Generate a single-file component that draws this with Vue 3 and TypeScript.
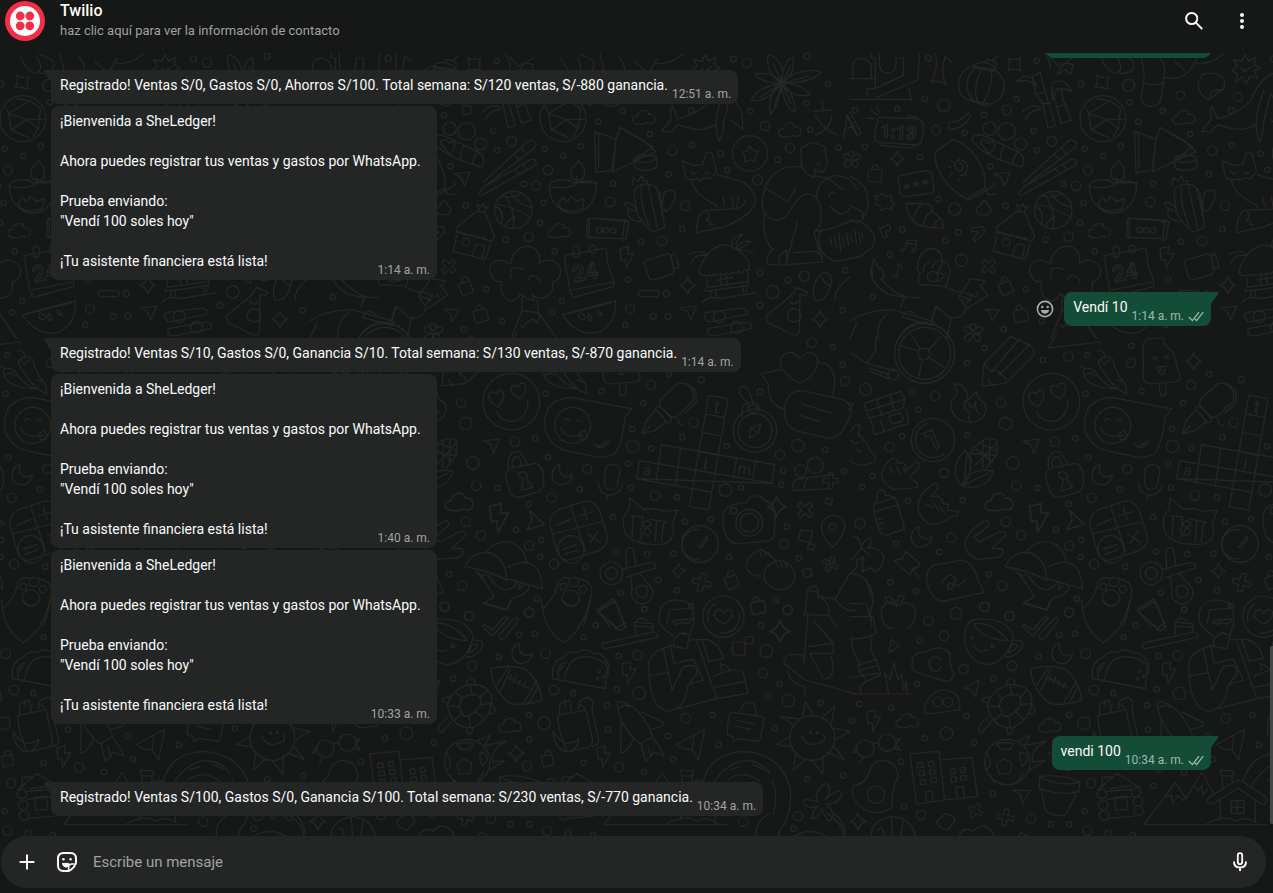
<script setup lang="ts">
import { ref } from 'vue'

interface Message {
  id: number
  from: 'contact' | 'me'
  intro?: string
  text: string
  time: string
  tail?: boolean
  reaction?: boolean
}

interface Label {
  text: string
  x: number
  y: number
  size: number
  turn: number
  thin?: boolean
}

interface DoodleRow {
  y: number
  shapes: string[]
  circles: number[][]
  stamps: [string, number, number, number, number][]
  labels: Label[]
}

const intro = `¡Bienvenida a SheLedger!

Ahora puedes registrar tus ventas y gastos por WhatsApp.

Prueba enviando:
"Vendí 100 soles hoy"

`
const ready = '¡Tu asistente financiera está lista!'

const messages: Message[] = [
  { id: 1, from: 'me', text: '', time: '' },
  { id: 2, from: 'contact', text: 'Registrado! Ventas S/0, Gastos S/0, Ahorros S/100. Total semana: S/120 ventas, S/-880 ganancia.', time: '12:51 a. m.', tail: true },
  { id: 3, from: 'contact', intro, text: ready, time: '1:14 a. m.' },
  { id: 4, from: 'me', text: 'Vendí 10', time: '1:14 a. m.', tail: true, reaction: true },
  { id: 5, from: 'contact', text: 'Registrado! Ventas S/10, Gastos S/0, Ganancia S/10. Total semana: S/130 ventas, S/-870 ganancia.', time: '1:14 a. m.', tail: true },
  { id: 6, from: 'contact', intro, text: ready, time: '1:40 a. m.' },
  { id: 7, from: 'contact', intro, text: ready, time: '10:33 a. m.' },
  { id: 8, from: 'me', text: 'vendi 100', time: '10:34 a. m.', tail: true },
  { id: 9, from: 'contact', text: 'Registrado! Ventas S/100, Gastos S/0, Ganancia S/100. Total semana: S/230 ventas, S/-770 ganancia.', time: '10:34 a. m.', tail: true },
]

const draft = ref('')

// Small motifs repeated across the wallpaper, each centred on its own origin.
const motifs: Record<string, string> = {
  spark: 'M0-23Q5-6 21 0Q6 5 0 23Q-5 6-21 0Q-6-5 0-23Z',
  square: 'M-19-19Q0-10 19-19Q11 0 19 19Q0 11-19 19Q-11 0-19-19Z',
  cloud: 'M-20 20C-40 20-38-6-20-3C-17-24 12-28 14-9C32-14 42 14 22 19C12 20 12 12 4 18C-4 24-12 20-20 20Z',
  cross: 'M-7-25Q0-29 7-25L7-7L25-7Q29 0 25 7L7 7L7 25Q0 29-7 25L-7 7L-25 7Q-29 0-25-7L-7-7Z',
  bolt: 'M-20-26L6-32L4-10L22-12L-2 32L-4 6L-16 8Z',
  plane: 'M-26-12L24-18L6 24L-4-2Z',
  moon: 'M-6-30C-32-24-40 14-14 28C8 38 30 20 31 0C16 14-16 4-6-30Z',
  tag: 'M-22-8L12-20L24 12L-8 26Z M-10-12C-16-34 4-40 10-20',
  lock: 'M-24-8Q-24-14-18-14L16-14Q22-14 22-8L22 20Q22 26 16 26L-18 26Q-24 26-24 20Z M-10-14C-14-36 12-36 10-14',
  smile: 'M-85 0A85 85 0 1 0 85 0A85 85 0 1 0-85 0Z M-44 30C-24 76 50 70 50-4 M-40 16C-84-8-70-40-44-24C-36-50-4-26-40 16Z M28-10C-20-24 0-62 18-44C30-72 62-46 28-10Z',
  flower: 'M0-6C-14-14-16-30-2-28C12-28 10-14 0-6C8-20 26-24 28-12C28 0 14 0 0 0C16 0 28 16 18 22C8 30 0 14 0 4C-4 22-20 30-26 18C-28 8-14 2-2 0C-22 0-34-12-24-20C-14-26-6-14 0-6Z',
}

const rows: DoodleRow[] = [
  {
    y: 150,
    shapes: [
      // Worker at a box, jug and table
      'M8 84L8 50C8 14 62 18 64 54L64 84 M0 86L76 86L76 114L52 116L52 136 M64-10L64 24 M64 24L76 24L76 86 M88-20L88 42C88 80 138 78 138 42L138 24L160 24L160 76L70 118 M210-20L204 90L80 142 M176 112L184 148L0 148 M252-10Q270 60 242 94Q266 90 290 104Q268 70 286 20L304 36',
      // Lantern
      'M350 148C312 128 320 60 368 48L430 58C478 84 472 148 420 162Z M376 42Q404 28 438 54L430 64L370 52Z M358 150L408 168L416 164 M404 38C410 22 434 30 440 44 M428 30L444 18 M374 54C338 92 350 128 370 152 M396 58C372 96 374 136 384 156 M424 60C430 100 412 142 396 162 M356 188C338 208 316 218 298 216L296 240C330 236 354 222 362 192',
      // Bamboo
      'M546 76Q560 78 570 66L586 126L558 134Z M558 134L578 160L594 234L616 226L586 126 M498 96Q526 68 548 86L560 108Q530 84 498 96Z M574 160L604 160 M606 120L634 220L664 210L638 146L634 116Z M620 170L650 162 M608 100Q640 78 666 124Q640 112 620 120L608 150Q600 118 608 100Z M518 184Q552 156 574 176 M528 208Q538 178 574 180',
      // Volleyball globe
      'M690 206A68 68 0 1 0 828 206A68 68 0 1 0 690 206Z M706 170L716 190L724 240L776 262 M716 190L780 152L812 176L804 236L770 208L716 190 M780 152L740 146 M724 240L770 208L826 208 M804 236L790 260',
      // Leaves, balloon and sock
      'M586 10Q606 44 600 56 M600 22L626 50Q640 34 670 44L662 74L646 58L622 74Q634 42 668 24 M752 22Q774 70 800 70Q824 56 800 22 M806 12Q864 30 850 54Q842 72 806 70 M868 4L880 50Q886 88 876 128C860 176 924 180 932 150L944 66Q946 42 926 20 M878 98Q912 110 942 98 M942 82Q1010 98 1040 26 M974 34L1006 62 M1040 40Q1080 44 1120 12 M1044 100L1058 74Q1090 62 1120 82Q1132 110 1110 124L1078 148Q1046 140 1044 100Z M1078 144Q1084 110 1118 122',
      // Badge
      'M1186 14L1196 34L1216 22L1212 44L1232 54L1212 62L1222 84L1200 78L1190 100L1176 80L1158 96L1162 72L1146 62L1162 48L1150 28L1174 34Z M1174 54L1184 64L1204 50',
      // Star anise
      'M1414 100C1372 70 1366 30 1378 14C1404 22 1428 62 1414 100Z M1414 100C1414 54 1434 24 1448 22C1456 58 1440 84 1414 100Z M1414 100C1450 62 1500 56 1534 66C1516 88 1470 100 1414 100Z M1414 100C1452 98 1488 112 1500 134C1470 142 1434 132 1414 100Z M1414 100C1444 120 1458 156 1454 186C1436 176 1416 146 1414 100Z M1414 100C1412 142 1398 176 1382 192C1374 156 1384 122 1414 100Z M1414 100C1386 140 1352 154 1324 152C1336 124 1370 106 1414 100Z M1414 100C1370 100 1346 88 1336 72C1366 66 1402 76 1414 100Z M1414 94L1390 42 M1420 94L1440 50 M1424 98L1496 78 M1406 106L1350 142 M1412 110L1394 168 M1420 108L1442 160',
      // Dolphin
      'M1270 70Q1230 84 1202 152Q1158 196 1102 206Q1094 180 1086 168Q1078 184 1084 208L1054 244L1082 246L1104 224Q1148 240 1180 238L1220 224 M1242 120Q1204 220 1228 274Q1242 250 1240 222L1262 130',
      'M1264 134L1296 186L1298 238L1260 208',
      // Alarm clock
      'M86 202L204 206Q224 212 220 246L214 276Q208 286 190 284L92 278Q70 276 74 246Z M90 278L92 286L180 294L196 286 M172 204L174 198L200 200L204 206 M80 174L90 188 M62 180L82 194 M50 204L72 206',
      // Surfboard
      'M308 268C376 288 412 366 404 414L350 446C284 412 250 350 256 306Z M350 446L358 450L436 404L430 396 M404 414L414 434L438 432 M328 340C344 338 344 366 326 362C306 354 312 322 340 332C360 344 352 376 330 376 M326 324L326 330 M304 332L310 338 M296 352L304 352 M300 376L308 370 M326 392L326 384 M352 378L346 370',
      // Cast with a heart
      'M366 266Q372 250 398 256L502 304Q530 320 518 344L510 350L440 326Q372 292 366 266Z M400 290C376 268 410 262 416 280C430 266 448 284 418 312Z M452 324Q450 290 468 288 M488 342Q490 312 508 306',
      // Chopsticks
      'M518 398L652 276Q664 264 678 278Q680 286 674 294L530 404 M504 434L520 412L664 328Q680 324 678 344L512 438 M614 314L630 330 M636 296L650 314 M616 358L630 374 M640 344L650 360',
      // Tents and puck
      'M854 244L918 268L906 360L858 368L854 244L866 252L866 352 M918 268L930 232L1028 290L970 336L908 366Z M930 232L1000 270L1038 306L974 332 M972 326C980 312 1030 312 1040 324L1040 350C1028 364 984 366 974 350Z M972 328C986 342 1030 340 1040 324',
      // Oil lamp
      'M718 408C716 388 774 384 790 398L860 398C860 452 830 490 786 490C742 486 718 448 718 408Z M718 408C740 416 790 416 800 398Q834 386 860 402 M784 374C776 350 800 348 806 332Q830 362 822 378C816 396 784 392 784 374Z M800 380L800 402 M744 460L758 442L770 456L782 440L800 454L822 446L818 474Q782 492 752 474Z',
      // Basketball
      'M554 480A56 56 0 1 0 666 480A56 56 0 1 0 554 480Z M582 432Q618 480 610 536 M600 424Q616 460 664 472 M576 438Q614 446 636 428 M558 462Q608 470 660 500 M574 520Q584 482 558 470 M614 500Q596 508 586 530',
      // Cactus
      'M972 426C982 392 1040 396 1050 430L1064 532L1030 546Q998 524 980 486Z M994 408Q988 460 1018 530 M1014 402Q1024 450 1044 540 M1038 412Q1050 450 1058 500 M972 482Q942 474 944 458Q980 460 978 486 M954 480Q948 516 998 514 M1062 430Q1084 410 1096 430Q1094 468 1068 484L1056 470Z M966 404L970 382L984 394L996 376L1000 392L1014 392L1008 404',
      // Fox
      'M1116 332L1128 386L1144 390L1164 386L1170 392L1180 384L1202 386L1220 364L1206 310L1192 306L1176 344L1150 346Z M1144 392Q1154 436 1216 464L1224 472 M1222 374L1300 396Q1340 424 1336 460Q1320 500 1244 530L1160 548Q1160 492 1186 480L1246 478Q1306 480 1306 450 M1188 482Q1208 500 1188 510L1202 516L1198 524L1210 524 M1140 364L1152 372L1160 366 M1184 366L1192 372L1200 364 M1238 442L1244 468 M1264 438L1270 476 M1286 440L1280 474',
      // Record with a star
      'M1267 310A53 53 0 1 0 1373 310A53 53 0 1 0 1267 310Z M1318 286L1328 300L1344 304L1336 318L1336 334L1320 330L1304 336L1304 318L1296 306L1312 302Z',
      // Seated reader
      'M1474 316Q1466 290 1490 286Q1512 270 1530 286Q1548 286 1546 306L1552 334Q1548 352 1540 366Q1520 366 1516 356L1512 382Q1482 372 1474 340Z M1520 344Q1530 334 1534 350 M1474 352C1420 342 1380 370 1364 414L1432 454L1458 416 M1516 378L1554 384L1600 420 M1366 418C1342 470 1368 516 1408 510C1440 506 1450 440 1490 432C1530 430 1540 480 1530 526L1512 548L1538 636L1410 646L1404 622L1430 600L1430 646 M1364 492C1354 550 1380 600 1390 596C1368 612 1368 640 1378 644L1410 642 M1462 516L1428 640 M1452 608L1516 604L1538 620 M1432 644L1540 636',
      // Speech mark with a smiley
      'M1520 450A62 62 0 0 1 1640 420 M1556 440Q1564 420 1574 430 M1562 470Q1594 510 1620 476 M0 380Q52 400 54 450Q56 500 24 516L0 510 M-2 466L38 486L40 506 M0 514L30 514Q90 550 68 590L30 620L0 626L-42 634Q-80 622 -90 594L-94 556L-84 540L-102 544L-60 536Z',
      // Sound wave in the speech mark
      'M-58 564L-54 586 M-46 556L-42 594 M-34 548L-28 602 M-22 560L-18 590 M-10 548L-4 588 M2 554L6 576 M14 540L20 584 M26 544L32 580 M36 550L38 566',
      // Password note, shell, cream swirl
      'M144 386Q142 378 154 376L226 362Q242 360 246 376L252 416Q252 428 240 430L168 440Q154 440 150 428Z M170 400L170 416 M162 406L178 412 M178 404L162 414 M198 394L198 410 M190 400L206 406 M206 398L190 408 M226 388L226 404 M218 394L234 400 M234 392L218 402',
      'M170 460L232 462Q250 468 248 486L276 508Q278 526 280 534Q240 534 232 530Q188 530 170 480Z M216 462Q198 480 190 506 M248 482Q226 492 218 530 M270 506Q250 516 252 534',
      'M380 474Q392 470 398 454Q410 446 412 466L422 474Q424 492 410 494Q374 498 380 474Z M74 436L88 438L98 430L108 440L122 436L124 452L134 462L122 470L126 480L106 474L94 482L90 468L76 462L82 450Z',
      // House with a thatched roof
      'M500 484L440 532L438 544L546 574L554 560L524 486Z M438 544Q446 554 452 546Q460 558 468 550Q476 562 486 554Q496 566 504 558Q514 570 522 562Q530 572 540 572 M440 556L430 604L526 628L542 578 M456 576A12 12 0 1 0 480 576A12 12 0 1 0 456 576Z M488 616L494 588Q516 574 524 592L516 624 M510 482L500 464L514 470L520 460L524 474L536 468L524 484',
      // Message banner
      'M838 504L838 560Q838 566 830 562L832 510ZL944 514L938 566L836 562 M838 504L950 510L956 518L948 566L938 572 M944 514L956 514',
      // Tree
      'M602 642C608 570 700 574 688 640C714 616 766 640 748 680Q738 698 726 696C738 740 690 758 668 734 M602 642C558 616 530 644 542 674Q552 700 576 694C560 748 612 772 630 732C660 752 680 760 668 736 M604 684Q592 642 640 658 M654 690C656 670 686 674 690 696 M638 734L634 786L604 866 M682 752L686 788L740 866 M636 782L682 788L690 800L680 820L668 806L652 816L640 832L630 824',
      // Calendar
      'M766 616L888 594L894 646L912 696L910 710L790 742L780 724L766 640Z M790 606A10 12 0 1 0 808 604A10 12 0 1 0 790 606Z M838 598A10 12 0 1 0 858 598A10 12 0 1 0 838 598Z M784 720L910 696',
      // Watermelon
      'M758 794L916 752Q922 824 862 848Q798 858 758 794Z M772 792L906 758 M806 794Q810 784 820 794Q830 802 824 808Q808 812 806 794Z M836 790Q848 800 844 812Q828 810 836 790Z M862 780Q874 784 876 796Q860 796 862 780Z',
      // Video camera and bar
      'M1004 644Q1000 634 1010 630L1070 612Q1080 610 1084 620L1092 664Q1092 672 1080 674L1030 690Q1020 690 1016 680Z M1082 620L1094 608L1108 652L1092 656 M990 722L1042 722Q1054 730 1042 740L990 740Q978 730 990 722Z',
      // Beach hut
      'M1166 668C1176 620 1210 590 1240 584C1290 592 1320 626 1318 656Q1312 668 1304 658Q1296 674 1286 664Q1278 676 1268 666Q1258 678 1250 668Q1240 682 1232 670Q1222 682 1214 672Q1204 682 1196 674Q1180 684 1166 668Z M1190 684L1192 712L1316 694L1312 666 M1184 714L1186 724L1316 706L1314 694 M1202 724L1204 744 M1216 720L1218 742 M1298 706L1302 728 M1308 706L1310 724 M1176 756Q1200 736 1230 746L1340 728 M1232 678L1234 704 M1248 676L1252 700 M1222 690L1268 682 M1138 612Q1176 596 1190 614 M1144 640Q1150 612 1188 616 M1268 594Q1256 566 1298 552Q1274 576 1280 594Q1300 566 1324 576L1280 600Q1300 594 1330 612',
      // Sliders and flask
      'M1186 788L1296 774Q1320 782 1312 792L1200 816Q1180 814 1186 788Z M1194 836L1310 816Q1330 820 1322 836L1210 858Q1190 856 1194 836Z M1210 800A18 18 0 1 0 1246 800A18 18 0 1 0 1210 800Z M1262 832A18 18 0 1 0 1298 832A18 18 0 1 0 1262 832Z',
      'M1460 712L1494 728L1486 738L1470 732L1468 840Q1466 862 1444 852L1374 818Q1360 800 1380 788L1446 734Z M1432 796A20 20 0 1 0 1472 796A20 20 0 1 0 1432 796Z M1442 752A10 10 0 1 0 1462 752',
      'M1514 750Q1500 700 1540 666Q1570 670 1564 700Q1550 760 1514 750Z M1534 680Q1542 700 1560 706 M1576 750Q1570 720 1620 680',
      // Dancer
      'M204 640Q212 596 246 596Q276 598 276 630Q306 650 300 670L288 710 M204 644Q196 662 210 668Q200 690 210 704L280 708Q320 730 340 726L376 740 M232 680A16 16 0 1 0 264 680A16 16 0 1 0 232 680Z M236 636Q214 650 222 666 M246 652L254 640Q270 620 278 640L262 668L284 674Q270 700 262 690 M68 682Q62 640 72 628L84 652Q100 650 102 682L92 686Q150 752 206 742 M62 654Q58 700 116 734L164 742L152 770 M356 686L404 692Q398 708 390 706L414 734L352 776L326 740L360 690 M334 738L364 752 M366 736L350 762 M380 728L386 742 M256 770L242 820L260 768L298 804Q340 808 348 776 M306 800L290 866',
      // Umbrella and hill
      'M0 812Q60 776 130 780L220 806L254 816L246 826L158 802 M158 802Q170 770 200 796 M0 866L20 820 M84 866Q80 810 116 790 M146 866Q170 816 222 816Q280 826 300 866',
      // Musical notes, candy cane
      'M162 604Q152 606 154 600Q158 594 164 598L172 570L202 572L194 604Q186 608 186 602Q188 596 194 598 M170 580L200 582 M132 676A6 5 0 1 0 142 674L144 640L156 648L154 658 M88 536L118 522L122 540L106 544L112 560L102 564ZM366 534L400 530L404 548L374 576L370 566L386 546L368 544Z',
      // Language glyph
      'M1510 184L1568 180 M1536 150L1540 180 M1516 196Q1540 240 1580 254 M1566 196Q1560 240 1516 254 M1600 262L1612 196L1640 250 M1604 236L1634 228 M-10 196L20 256L34 250L0 186',
    ],
    circles: [[235,25,9],[560,33,8],[224,146,8],[282,166,19],[693,103,9],[836,106,18],[840,157,8],[499,148,8],[991,136,13],[1164,141,13],[470,180,14],[142,177,8],[15,181,8],[402,195,8],[938,183,8],[1144,182,9],[865,215,8],[258,240,14],[344,249,8],[550,242,8],[1020,252,8],[605,274,15],[44,290,8],[210,321,8],[704,297,8],[812,289,8],[561,300,8],[760,317,8],[1087,302,14],[1145,285,8],[1232,311,8],[421,349,8],[714,361,14],[1076,372,8],[1252,360,8],[641,402,8],[678,407,14],[909,401,8],[265,448,8],[314,477,18],[467,467,8],[701,458,8],[901,456,14],[1126,467,14],[157,539,8],[325,547,8],[690,519,8],[656,560,14],[587,569,8],[1117,538,8],[993,575,8],[1056,573,14],[286,572,8],[120,614,8],[734,604,8],[955,689,8],[528,718,8],[68,741,8],[334,631,18],[1365,228,14],[1501,240,8],[1554,103,8],[1488,160,8],[1491,19,9],[1311,38,14],[1270,27,9],[1440,295,14],[1404,329,8],[1585,293,8],[1343,390,15],[1350,668,9],[1435,690,9],[1483,678,15],[1388,726,19],[1350,766,9],[1598,781,8],[1606,661,8],[1320,184,8],[1069,731,9],[1030,799,9],[1074,799,9],[960,778,13],[946,825,8],[727,787,8],[756,753,8],[576,814,8],[461,838,8],[868,540,8],[888,541,8],[909,542,8],[419,236,20],[470,244,26],[512,282,18],[1414,103,9]],
    stamps: [['square', 493, 43, 0, 1], ['square', 757, 97, 8, 1], ['cloud', 1002, 202, 0, 1], ['cloud', 1440, 240, 0, 1], ['cloud', 748, 542, 0, 1], ['spark', 142, 326, 0, 1], ['spark', 1133, 706, 0, 1.1], ['spark', 1530, 808, 0, 1.1], ['cross', 416, 649, 45, 0.9], ['bolt', 950, 622, 0, 1], ['plane', 457, 384, 0, 1], ['plane', 1136, 786, 0, 1], ['plane', 424, 792, 10, 0.9], ['tag', 466, 712, 0, 1], ['lock', 76, 372, 0, 0.9], ['lock', 512, 792, -14, 0.9], ['flower', 6, 330, 0, 0.9], ['flower', 370, 850, 0, 1]],
    labels: [{ text: '1:13', x: 90, y: 262, size: 54, turn: 4 }, { text: '24', x: 792, y: 696, size: 66, turn: -10 }],
  },
  {
    y: 1020,
    shapes: [
      // Wheel
      'M134 40A90 90 0 1 0 314 40A90 90 0 1 0 134 40Z M146 40A78 78 0 1 0 302 40A78 78 0 1 0 146 40Z M204 42A18 18 0 1 0 240 42A18 18 0 1 0 204 42Z M206 34L152 16 M216 60L206 114 M236 52L282 82 M236 30L272-10 M210 28L190-8 M0 38L50 70L76 34L78-10 M50 70L134 92 M56 84L118 104 M62 94L116 116 M114 104A16 16 0 1 0 146 104A16 16 0 1 0 114 104Z',
      // Pencil
      'M396 138L402 72L482-10L540 16Q556 30 552 46L468 130Z M402 72L426 96Q440 80 452 104Q470 110 468 130 M426 94L510-6 M448 104L540 12 M414 118L428 138 M596 24L752 6 M596 24L620-20',
      // Popsicle and chillies
      'M880 12Q886-2 900-4L940-6Q940 20 970 36L990 110Q990 124 974 126L900 132Q880 130 880 112Z M928 134L930 162Q940 172 948 162L948 132 M908 50L922 54L910 60 M956 46L944 52L956 58 M918 82L950 78 M924 82Q926 104 936 104Q946 102 944 80 M934 82L934 94',
      'M744 66Q764 40 788 58Q796 100 826 132L830 162Q780 140 744 66Z M700 90Q716 76 736 96Q760 134 798 146L766 144Q700 134 700 90Z M764 48Q764 32 744 30 M706 86L690 76 M800 120L826 128 M754 64L764 74L774 62 M708 104L722 98L734 106',
      // Gift, fire, clock, corn
      'M42 190L152 154L164 176L160 204L56 236Z M62 240L74 284L176 250L168 210 M80 178L96 228 M120 166L134 214 M52 212L164 178 M116 230L150 218Q164 230 156 244L126 252Z M90 240L104 276',
      'M312 132Q350 130 354 180L380 154Q382 180 406 190Q416 232 374 246Q318 252 304 206Q300 180 320 166Q322 150 312 132Z M346 178Q336 206 360 220Q350 236 362 244 M346 178L366 204L378 184Q372 212 390 222',
      'M184 300A65 65 0 1 0 314 300A65 65 0 1 0 184 300Z M232 250A53 53 0 1 0 282 342 M220 280L246 270L268 322L258 326L240 288L228 290Z',
      'M366 366L358 340L396 302Q412 290 438 300Q446 324 438 346L406 388 M358 340L436 346 M368 320L430 366 M384 308L440 332 M400 298L398 386 M420 296L418 376 M438 310L376 376 M332 436Q294 380 346 330Q380 380 342 436Z M334 438Q360 380 430 394Q408 456 334 438Z M342 432L350 346 M344 434L414 400',
      // Winking speech mark
      'M704 250Q706 176 784 172L942 202L966 206L944 234Q940 300 916 340Q880 360 836 346L760 330Q704 306 704 250Z M734 256A54 54 0 1 0 842 256A54 54 0 1 0 734 256Z M764 242Q770 228 780 242 M800 244Q810 232 816 246 M752 262Q760 296 820 286 M806 282L814 300Q830 302 830 288L824 270Z M854 312L866 324L890 302 M866 316L876 324L900 304',
      // Padlock, fountain pen, microphone
      'M586 410Q590 390 604 384L676 370Q692 372 698 396L702 430Q696 450 684 456L630 472Q610 474 600 456Z M596 384L594 362Q602 330 630 336L650 366L650 374 M608 382Q602 352 622 350Q632 352 634 376 M634 452L640 418Q620 410 628 398Q646 390 654 408L648 416L668 442Z',
      'M1050 198Q1046 182 1056 174L1102 132Q1122 124 1140 140Q1156 160 1150 184L1104 226Q1092 238 1080 228Z M1132 132L1156 150L1160 186L1124 220 M1036 206Q1044 190 1062 210L1084 236Q1084 250 1072 248Z M1038 210L1010 240L996 282L1034 272L1068 246 M1000 280L1020 258 M1104 236Q1104 254 1118 256',
      'M886 388Q890 374 908 374Q930 376 930 392L922 434Q916 450 900 450Q884 444 884 430Z M866 426Q866 464 900 466Q930 462 936 436 M894 466L890 480',
      // Crossword
      'M1054 314L1394 374L1384 430L980 416L988 362L1390 430 M980 416L988 362L1046 372L1054 314 M980 416L1200 456 M1196 166L1254 176L1196 510L1138 500L1196 166 M1188 222L1244 232 M1178 278L1234 288 M1168 334L1224 346 M1158 390L1214 400 M1148 446L1204 456 M1112 324L1096 436 M1046 372L1038 426 M1280 356L1270 412 M1336 366L1328 420',
      // Compass
      'M1270 272A65 65 0 1 0 1400 272A65 65 0 1 0 1270 272Z M1284 272A51 51 0 1 0 1386 272A51 51 0 1 0 1284 272Z M1296 228Q1292 190 1324 186Q1350 188 1346 216 M1314 206A12 12 0 1 0 1338 206A12 12 0 1 0 1314 206Z M1318 200L1288 158Q1288 134 1306 140Q1322 156 1330 194 M1318 294L1322 264L1352 252L1346 278Z M1322 264L1346 278',
      // Heart and chat bubbles
      'M1470 130Q1402 96 1414 52Q1440 20 1470 56Q1500 20 1522 54Q1530 100 1470 130Z M1524 68Q1560 66 1570 100Q1580 140 1566 168 M1412 88L1354 102L1376 134Q1370 190 1422 208 M1424 206Q1430 150 1480 152L1600 180Q1640 200 1610 250Q1590 300 1550 294L1458 272Q1420 256 1424 206Z M1476 192L1566 220 M1470 226L1526 244 M-10 186L10 192L-4 208',
      // Hands
      'M0 276Q20 246 30 256L24 286Q40 290 42 304L54 314Q60 324 60 334Q80 344 74 364Q30 388 0 362 M4 300L14 312L26 306 M20 328L34 336 M94 402Q100 370 130 354Q142 356 144 370L160 368Q172 382 168 392L196 366Q214 364 206 384L178 412L202 430Q208 444 190 444L130 448Q98 434 94 402Z M120 382L130 400 M140 380L150 404 M160 384L168 400',
      'M204 496Q204 464 250 432Q266 426 264 444L244 470L262 468Q280 478 278 490L296 494L294 510L324 514Q328 530 304 530Q274 556 240 552Q204 536 204 496Z M228 492L250 504 M250 488L266 512 M270 500L284 520 M344 610Q350 576 402 544Q418 538 416 556L386 582L370 590L390 606L408 596L448 576Q470 572 468 586L424 626L456 626Q466 640 446 652L384 658Q348 648 344 610Z',
      // Baby bottle and pin
      'M70 510Q68 492 82 482Q78 450 94 450Q108 452 106 468Q134 462 144 494L164 566L112 586Q90 586 84 560Z M74 492L136 472 M74 514L146 494 M84 538L96 536 M86 552L104 548 M90 566L100 564 M132 662L158 656L166 634L208 668L206 680L190 684L180 704Z M188 688L208 714 M204 682L188 690',
      // Calculator, crying cat, dial
      'M720 556Q716 524 748 508L820 484Q850 478 868 510L892 590Q892 622 866 632L780 660Q756 666 744 640Z M782 500L828 636 M726 582L874 546 M740 556L782 538 M806 528L846 516 M820 500L832 540 M834 582L872 608 M864 574L840 610 M746 636A38 38 0 1 1 820 620A38 38 0 1 1 746 636Z M758 628L800 614 M766 642L804 630',
      'M944 524L958 508L960 474L1000 508Q1040 502 1058 514L1102 510L1088 550Q1100 600 1060 612Q980 620 948 584Q934 550 944 524Z M960 528L998 530L996 536Q1000 560 990 570Q1000 590 988 600 M970 532L966 590 M1020 538L1070 546L1060 552L1054 604 M1040 542L1036 604 M1000 552A10 8 0 1 0 1022 552A10 8 0 1 0 1000 552Z M1000 582Q1008 552 1022 572Q1020 590 1000 582Z',
      'M1115 612A55 55 0 1 0 1225 612A55 55 0 1 0 1115 612Z M1168 570A44 44 0 1 0 1170 656 M1166 622L1190 590L1194 596L1174 624Z',
      // Photo camera
      'M1238 536Q1238 504 1268 494L1310 486L1322 468L1352 468L1366 482Q1396 490 1396 530L1392 590Q1380 604 1360 604L1280 612Q1250 604 1242 570Z M1278 548A40 40 0 1 0 1358 548A40 40 0 1 0 1278 548Z M1290 548A28 28 0 1 0 1346 548A28 28 0 1 0 1290 548Z M1260 512A10 10 0 1 0 1280 512A10 10 0 1 0 1260 512Z',
      // Cast and location marker
      'M1450 446Q1444 420 1470 416L1570 404 M1448 452L1560 446 M1484 450Q1480 420 1500 410 M1568 622Q1530 590 1534 552Q1550 520 1580 528Q1610 540 1604 566Q1590 600 1568 622Z M1558 560A10 10 0 1 0 1578 560A10 10 0 1 0 1558 560Z M1472 570L1508 574L1500 608L1466 600Z M1496 610L1514 614L1510 630L1492 626Z M1476 690L1500 684L1506 706L1484 714Z M1548 474L1568 478L1564 494L1546 490Z',
      // Mushrooms, paw, scissors
      'M464 680Q490 630 540 638Q590 660 590 720Q530 690 464 680Z M526 640Q550 600 600 606Q640 620 650 664 M594 682Q650 650 682 686Q700 720 696 746Q640 730 590 716 M496 692Q540 740 552 770L520 790L588 810L606 776Q660 760 656 738 M506 698L516 710L528 702 M534 706Q570 760 600 746Q620 738 620 724 M628 732L626 748L640 736',
      'M696 808Q740 770 744 726Q760 706 780 716 M802 716Q840 720 846 750Q840 800 820 860 M750 740A10 10 0 1 0 770 740A10 10 0 1 0 750 740Z M778 726A14 14 0 1 0 806 726A14 14 0 1 0 778 726Z M808 748A10 10 0 1 0 830 748A10 10 0 1 0 808 748Z M756 774A26 24 0 1 0 808 774A26 24 0 1 0 756 774Z',
      'M870 700A34 34 0 1 0 938 700A34 34 0 1 0 870 700Z M886 700A18 18 0 1 0 922 700A18 18 0 1 0 886 700Z M936 688L1020 668Q1040 670 1036 684L948 712 M950 690L948 632Q958 616 970 628L978 676 M962 710L966 750A32 32 0 1 0 1022 740L988 700 M978 754A18 18 0 1 0 1014 754A18 18 0 1 0 978 754Z',
      // Bow, note and apple
      'M10 590Q30 590 34 624Q40 600 62 592Q66 620 50 624Q90 620 102 650Q100 680 76 696L60 682L36 696L40 652L20 660Q30 680 0 700 M34 624L6 660 M34 624L60 646 M230 720Q226 690 252 676L336 660Q370 666 384 720L402 758L350 768L280 784Q240 780 230 720Z M276 728Q300 690 316 716Q310 750 294 748Q286 720 322 738L348 720 M144 796Q110 770 94 810Q90 860 130 866 M144 796Q180 776 196 810Q200 850 170 866 M140 800Q132 770 106 770Q110 794 136 796 M142 786L146 766L164 772L152 788',
      // Dumplings
      'M1308 680Q1310 644 1354 628Q1390 650 1398 664 M1308 680Q1320 712 1356 708 M1362 710Q1360 668 1416 660Q1460 680 1454 720Q1440 754 1400 748Q1366 740 1362 710Z M1350 640L1356 650 M1364 634L1370 648 M1376 636L1382 652 M1398 668L1404 680 M1412 660L1416 680 M1424 664L1430 684',
      // Bottle and gown
      'M1486 820L1492 752Q1510 724 1526 750L1524 770Q1560 780 1556 820 M1492 752L1524 756 M1524 770L1576 776L1620 700 M0 700Q40 700 60 740Q80 780 60 810L66 860 M50 720L64 770 M0 790L50 792L62 840 M1576 776Q1600 820 1640 810 M1480 824L1556 826L1580 860',
      // Tube
      'M862 808L910 776L924 800L944 860 M862 808L900 860 M872 810L914 784',
    ],
    circles: [[47,148,18],[186,157,8],[255,167,14],[352,69,8],[403,24,8],[204,209,8],[453,188,14],[467,251,19],[352,286,8],[156,289,8],[119,321,14],[579,60,8],[655,50,14],[712,46,8],[843,69,14],[844,18,8],[707,161,8],[875,154,8],[1077,102,8],[1023,135,14],[1000,189,8],[1151,248,14],[1117,292,8],[966,267,8],[615,305,14],[676,295,8],[968,319,19],[1024,325,8],[715,352,8],[489,369,19],[832,387,14],[955,371,8],[282,399,14],[67,409,8],[36,441,8],[499,437,14],[563,444,8],[809,448,8],[963,443,8],[725,473,14],[656,492,8],[1035,467,14],[1101,472,8],[174,483,8],[338,481,8],[30,550,15],[467,545,14],[513,586,14],[618,570,8],[909,532,8],[1125,545,8],[1203,538,8],[304,593,14],[138,610,8],[268,636,8],[657,617,14],[694,600,8],[691,651,8],[732,673,14],[826,680,8],[917,635,8],[1012,643,8],[1090,641,8],[417,702,8],[457,737,14],[121,726,8],[197,754,8],[1045,720,8],[1101,751,8],[932,758,8],[681,776,8],[404,801,14],[657,817,14],[478,828,14],[1003,808,8],[1246,450,19],[1293,443,8],[1251,318,8],[1410,345,14],[1464,317,19],[1545,330,8],[1420,392,8],[1414,434,8],[1430,560,8],[1421,612,14],[1257,652,8],[1467,654,8],[1350,155,9],[1174,119,9],[1568,22,8],[1598,74,8],[1505,8,14],[1605,124,14],[1472,392,18],[1516,376,24],[1398,780,8],[1433,810,14],[1603,394,8],[1144,798,8]],
    stamps: [['smile', 604, 185, 0, 1], ['spark', 1031, 64, 0, 1.1], ['spark', 1105, 693, 0, 1], ['spark', 1400, 500, 0, 1.3], ['cross', 1175, 728, 15, 1.05], ['cross', 1485, 510, 45, 1], ['cross', 1562, 422, 0, 0.9], ['cross', 1560, 672, 25, 0.9], ['cloud', 448, 486, 0, 1.25], ['bolt', 566, 534, 0, 1.35], ['plane', 545, 315, 0, 1], ['plane', 668, 545, 50, 1.2], ['moon', 756, 404, 0, 1], ['moon', 214, 590, 0, 1], ['tag', 1264, 724, 0, 1], ['lock', 1344, 796, -14, 0.9], ['flower', 1560, 672, 0, 0.5]],
    labels: [
      { text: 't', x: 1208, y: 218, size: 56, turn: 10, thin: true },
      { text: 'a', x: 998, y: 404, size: 46, turn: 8, thin: true },
      { text: 'i', x: 1178, y: 386, size: 50, turn: 8, thin: true },
      { text: 'm', x: 1282, y: 400, size: 46, turn: 8, thin: true },
    ],
  },
  {
    y: 1800,
    shapes: [
      // Boots in grass
      'M0 50L70 50L78 100Q40 120 0 116 M6 120L8 150L30 190 M66 112L62 150L84 190 M24 196L80 178L92 220L34 226Z M26 212L86 196 M0 232L40 228L50 244L28 260L34 282 M104 216L116 282 M40 248L92 226 M0 282L184 282 M104 220L120 240L132 188L144 240L156 220L160 270L170 244L170 282 M1484 170Q1420 150 1422 190L1484 240L1640 282 M1484 282L1484 260Q1440 250 1434 214 M1494 40L1482 190 M1510 60L1570 130L1570 160L1500 160 M1500 160L1540 236Q1580 240 1564 170 M1500 140L1566 130',
      // Cup, play mark, steak
      'M344 110Q346 60 380 58Q470 50 490 110Q470 190 410 194Q344 180 344 110Z M370 72Q420 60 474 122Q400 120 370 72Z M492 120Q530 120 514 146Q490 176 468 170 M474 158Q490 120 502 136Q500 150 474 158Z M370 134Q384 164 416 148 M118 158L124 118L148 138Z M186 194Q184 154 228 156Q270 130 300 160Q296 190 312 220Q304 250 280 242L200 216Q184 212 186 194Z M274 180Q250 160 238 184Q236 214 262 214L276 198',
      // Double check, gem, tube
      'M516 78L548 108L594 54Q584 46 576 58L548 90L524 74Z M566 106L614 54Q628 50 624 64L580 118Q566 118 566 106Z M520 8L592 30L604 0 M694 0Q700 90 760 128Q820 90 840 0 M760 0Q784 36 810 0 M862 32L914 4L948 80L932 92Z M926 80L948 70 M862 32L926 92',
      // Cake on tray
      'M876 130L1030 96Q1050 100 1042 112L888 146Q872 146 876 130Z M976 102L974 66L1030 72L1026 96 M974 78L1030 82 M980 64Q984 50 1000 56Q1010 56 1010 68',
      // Man with phone
      'M1048 66Q1040 10 1090 0Q1150 0 1150 40L1152 70L1140 104L1112 100L1092 116L1090 140L1130 146L1140 104 M1048 66Q1060 90 1090 108 M1070 70L1080 30L1140 24 M1090 62L1150 56 M1088 66Q1100 80 1112 66Q1130 80 1146 60 M1118 98L1128 100 M1136 120L1190 118Q1230 130 1240 176 M1086 136Q1030 150 1016 186Q1014 330 1078 334Q1130 320 1132 260L1160 222Q1164 196 1140 196L1120 200L1086 270L1060 146 M1082 140L1092 190L1114 186 M1018 228L1076 218 M1112 184L1150 178L1180 240L1140 252 M1160 122L1220 296L1104 326 M1220 296L1314 280L1300 220Q1280 196 1210 230 M1196 184L1236 176 M1236 210L1230 190L1246 196L1262 212 M1214 262L1304 244 M1176 120L1196 180',
      // Heart token
      'M1178 50A62 62 0 1 0 1302 50A62 62 0 1 0 1178 50Z M1194 66A48 48 0 0 1 1214 12 M1230 98A48 48 0 0 0 1286 36 M1240 72Q1200 52 1218 32Q1234 22 1240 40Q1256 20 1268 36Q1270 60 1240 72Z M1268 126L1304 126L1306 166L1268 164Z M1306 112L1330 108L1330 130L1308 132Z',
      // Taco and football
      'M728 236Q720 186 762 170Q780 150 800 158Q830 140 850 160Q880 156 890 186Q904 196 890 216L886 266L728 236Z M764 240Q770 170 830 170Q900 176 894 226 M746 232Q736 200 764 188 M762 196L750 210 M542 206Q610 190 650 210Q690 250 696 300Q640 320 600 310Q546 270 542 206Z M560 256L594 204 M572 272L602 206 M642 308L680 242 M656 310L688 254 M592 232L656 264 M604 224L598 242 M618 230L610 250 M632 238L624 256 M646 246L638 266',
      // Turtle and dome
      'M412 318Q420 270 478 254Q540 250 546 300Q540 360 490 382Q430 392 412 318Z M448 320Q450 284 490 284Q520 284 510 316Q490 350 462 350Z M412 318L448 320 M440 280L458 296 M480 254L486 284 M532 270L510 292 M546 310L512 314 M520 356L498 336 M480 384L478 352 M430 364L454 342 M470 254L472 242Q482 226 494 242L494 254 M416 308L398 306Q392 288 424 292 M542 312Q566 330 548 342L534 340 M424 366L396 398Q376 390 390 374L414 350 M470 386L474 402Q488 404 488 384 M222 336Q224 290 270 270Q330 270 330 316L328 330L230 342Z M250 306A14 14 0 1 0 278 306A14 14 0 1 0 250 306Z M280 306A14 14 0 1 0 308 306A14 14 0 1 0 280 306Z',
      // Grocery bag, rocket, package
      'M742 346L828 330L848 420Q846 440 830 444L770 456L748 388Z M748 342L750 310L778 300L782 318L784 336 M806 328Q800 296 836 292L850 306L846 330L866 420Q870 434 846 440 M730 394Q760 450 806 418Q798 460 764 454Q730 440 730 394Z M764 300L766 318 M826 332Q820 314 806 314',
      'M922 316Q920 300 940 306Q1000 330 1028 410L990 432Q930 380 922 316Z M934 360L932 458Q948 462 972 416 M996 336L1060 368Q1070 380 1020 388 M926 326Q940 310 960 320 M994 432L1006 484L1022 470L1030 456L1062 468L1050 444L1028 412 M1014 440L1022 470',
      'M1264 336L1356 350Q1364 354 1360 364L1352 414L1346 424L1290 416L1272 424L1270 412L1252 404Q1252 352 1264 336Z M1294 330Q1300 300 1330 310Q1342 324 1336 344 M1280 362L1336 372 M1276 378L1322 388 M1098 434L1184 388L1166 480L1146 450L1120 446Z M1146 450L1152 408',
      // Paper plane, soccer ball, sunglasses
      'M342 264L388 240L376 290L362 270Z M404 486A68 68 0 1 0 540 486A68 68 0 1 0 404 486Z M440 494L462 476L486 490L480 520L448 522Z M440 432Q470 424 490 432L480 448L454 448Z M510 456Q534 460 532 480L518 500Q508 480 510 456Z M406 460Q424 470 420 500L410 506 M420 526L434 550 M500 548L520 518 M500 424L540 406L524 436L590 424Q540 450 548 486L584 482L540 510 M20 446A26 26 0 1 0 72 446A26 26 0 1 0 20 446Z M86 428A26 26 0 1 0 138 428A26 26 0 1 0 86 428Z M68 434Q80 424 88 432 M136 420L150 416L138 434L152 452L130 444 M20 440L8 458L20 454 M40 472L28 490',
      // Egg, offices
      'M92 482Q140 480 144 530Q120 580 128 620Q90 650 44 630Q0 600 10 558Q50 550 60 510Q72 484 92 482Z M52 584A26 26 0 1 0 104 584A26 26 0 1 0 52 584Z M180 462L260 454Q270 456 268 464L284 600L200 612Z M270 480L366 472L382 590L284 600 M202 490L218 488L220 502L204 504Z M234 486L250 484L252 498L236 500Z M206 514L222 512L224 526L208 528Z M238 510L254 508L256 522L240 524Z M210 540L226 538L228 552L212 554Z M242 534L258 532L260 546L244 548Z M300 508L314 506L316 520L302 522Z M330 504L344 502L346 516L332 518Z M302 532L318 530L320 544L304 546Z M332 528L348 526L350 540L334 542Z M230 610L226 576L246 572L250 606 M322 596L318 562L340 560L344 592',
      // Flower pot
      'M570 530Q630 520 690 546L686 574Q640 590 568 566Z M570 530Q620 560 688 548 M574 572L586 628Q600 650 646 646L678 584',
      // Log cabin
      'M744 570L800 520L866 560 M756 564L756 532L790 530 M742 582A14 14 0 1 0 770 582A14 14 0 1 0 742 582Z M844 576A14 14 0 1 0 872 576A14 14 0 1 0 844 576Z M746 616A14 14 0 1 0 774 616A14 14 0 1 0 746 616Z M850 604A14 14 0 1 0 878 604A14 14 0 1 0 850 604Z M748 646A14 14 0 1 0 776 646A14 14 0 1 0 748 646Z M852 632A14 14 0 1 0 880 632A14 14 0 1 0 852 632Z M770 574L844 568 M772 598L846 590 M776 656L854 648 M794 592L828 588L834 628L796 630Z M780 566L846 556',
      // Mountains and cabin
      'M882 674L976 548L1008 596L1056 516L1090 580 M882 674L1250 674 M950 590L964 586L968 612L984 586L1000 602L1010 590 M1034 560L1042 574L1056 556L1058 586L1072 566 M1072 606Q1070 594 1084 588L1154 544Q1164 538 1176 544L1244 588Q1258 600 1244 612Q1236 616 1224 606L1164 564L1094 608Q1080 616 1072 606Z M1110 602L1112 658 M1216 606L1216 664 M1066 674Q1120 640 1160 664Q1190 644 1224 674 M1144 602L1182 602L1182 640L1144 640Z M1162 602L1162 640 M1144 622L1182 622 M1114 520Q1106 506 1124 512L1148 512Q1156 524 1142 528L1116 528Z M1116 530L1118 562 M1146 528L1146 544',
      // Rainbow
      'M1180 544Q1200 460 1300 454Q1410 460 1440 560Q1450 640 1410 690L1400 720 M1200 570Q1230 500 1300 482Q1350 480 1380 520 M1262 508L1290 500 M1330 494L1360 508 M1386 540Q1406 580 1390 640 M1254 540Q1300 506 1350 544 M1340 710Q1330 670 1380 640',
      // Sun
      'M1440 414A67 67 0 1 0 1574 414A67 67 0 1 0 1440 414Z M1478 346L1486 304L1510 346 M1536 354L1574 318L1564 372 M1572 384L1620 394L1574 420 M1570 438L1602 478L1552 458 M1540 466L1538 522L1504 480 M1484 480L1450 512L1458 458 M1440 440L1398 434L1442 408 M1450 374L1410 350L1466 356 M1476 408Q1490 450 1542 422Q1546 410 1540 402',
      // Croissant, die, petals
      'M64 712Q60 660 128 650Q190 656 196 712 M86 690Q96 670 104 712 M124 654L128 712 M160 660L152 712 M260 664L288 640Q316 650 314 666L292 690Q262 684 260 664Z M326 712Q340 676 370 694Q400 660 430 700L430 712 M500 712L512 698L540 712 M762 712L770 690L784 690L780 712',
      // Lotus
      'M1480 610Q1478 588 1524 608Q1510 570 1550 550Q1570 570 1546 598Q1590 560 1596 580Q1590 610 1550 614Q1580 640 1560 664Q1540 650 1536 624Q1520 660 1504 656Q1510 630 1524 618Q1500 630 1480 610Z M1450 710Q1500 680 1550 710 M1550 640Q1610 680 1600 720 M1572 640Q1600 660 1606 700',
    ],
    circles: [[318,40,18],[235,62,14],[404,20,14],[478,48,14],[282,107,14],[209,122,8],[367,113,4],[428,138,5],[341,207,14],[486,198,14],[430,236,8],[201,252,8],[28,312,8],[124,323,8],[350,348,8],[224,415,8],[372,428,8],[153,485,8],[657,38,14],[628,104,8],[675,102,8],[821,112,8],[857,76,8],[1003,28,8],[566,170,8],[707,161,14],[926,168,8],[983,166,14],[732,270,14],[790,280,8],[920,268,8],[988,280,19],[891,316,8],[657,345,8],[702,370,19],[894,389,8],[1127,355,14],[1207,345,8],[1226,434,8],[1073,408,8],[1089,478,8],[1002,517,8],[927,502,14],[821,488,8],[723,550,14],[910,558,8],[428,581,8],[704,633,8],[602,673,8],[658,673,8],[543,656,14],[712,692,14],[213,645,14],[162,620,8],[658,418,8],[651,498,14],[289,400,19],[868,214,4],[880,230,4],[862,236,4],[1433,30,14],[1353,76,8],[1369,153,19],[1359,220,14],[1409,252,8],[1374,289,8],[1435,302,19],[1532,309,8],[1395,385,8],[1492,538,8],[1464,648,14],[1451,686,8],[1600,527,8],[1300,665,14],[848,705,8],[5,362,8],[1502,398,3],[1522,398,3]],
    stamps: [['moon', 636, 160, 0, 1], ['bolt', 956, 218, 0, 1], ['bolt', 880, 470, 0, 1], ['bolt', 70, 362, 0, 1], ['cloud', 172, 362, 0, 1], ['cloud', 600, 376, 0, 1], ['spark', 619, 460, 0, 1.1], ['spark', 24, 664, 0, 1.1], ['spark', 1410, 94, 0, 1.4], ['cross', 466, 652, 10, 0.95], ['cross', 376, 632, 30, 0.85], ['plane', 514, 586, 8, 1], ['lock', 1344, 18, -14, 0.9], ['tag', 712, 480, 10, 0.9]],
    labels: [],
  },
]
</script>

<template>
  <div class="app">
    <svg class="wallpaper" width="100%" height="100%" aria-hidden="true">
      <defs>
        <g id="doodles" transform="scale(.33333)">
          <g v-for="row in rows" :key="row.y" :transform="`translate(2550 ${row.y})`">
            <path v-for="(d, i) in row.shapes" :key="'p' + i" :d="d" />
            <circle v-for="(c, i) in row.circles" :key="'c' + i" :cx="c[0]" :cy="c[1]" :r="c[2]" />
            <path
              v-for="(s, i) in row.stamps"
              :key="'s' + i"
              :d="motifs[s[0]]"
              :transform="`translate(${s[1]} ${s[2]}) rotate(${s[3]}) scale(${s[4]})`"
            />
            <text
              v-for="l in row.labels"
              :key="l.text"
              :class="{ thin: l.thin }"
              :font-size="l.size"
              :transform="`translate(${l.x} ${l.y}) rotate(${l.turn})`"
            >{{ l.text }}</text>
          </g>
        </g>
        <pattern id="tile" width="540" height="900" patternUnits="userSpaceOnUse">
          <use href="#doodles" x="-1620" />
          <use href="#doodles" x="-1080" />
          <use href="#doodles" x="-540" />
        </pattern>
      </defs>
      <rect class="fill" width="100%" height="100%" fill="url(#tile)" />
    </svg>

    <header class="header">
      <svg class="avatar" viewBox="0 0 40 40" role="img" aria-label="Twilio">
        <circle cx="20" cy="20" r="20" fill="#f22f46" />
        <circle cx="20" cy="20" r="15" fill="#fff" />
        <g fill="#f22f46">
          <circle cx="15.2" cy="15" r="4.4" />
          <circle cx="24.8" cy="15" r="4.4" />
          <circle cx="15.2" cy="24.8" r="4.4" />
          <circle cx="24.8" cy="24.8" r="4.4" />
        </g>
      </svg>
      <div class="contact">
        <h1 class="name">Twilio</h1>
        <p class="hint">haz clic aquí para ver la información de contacto</p>
      </div>
      <div class="actions">
        <button class="icon-button" type="button" aria-label="Buscar">
          <svg viewBox="0 0 24 24" width="24" height="24" fill="none" stroke="#fafafa" stroke-width="2">
            <circle cx="9.7" cy="9.5" r="5.6" />
            <path d="M13.8 13.6L20.2 20" />
          </svg>
        </button>
        <button class="icon-button" type="button" aria-label="Menú">
          <svg viewBox="0 0 24 24" width="24" height="24" fill="#fafafa">
            <circle cx="12" cy="6" r="2" />
            <circle cx="12" cy="12" r="2" />
            <circle cx="12" cy="18" r="2" />
          </svg>
        </button>
      </div>
    </header>

    <main class="thread">
      <div
        v-for="m in messages"
        :key="m.id"
        class="row"
        :class="[m.from, { tailed: m.tail }]"
      >
        <button v-if="m.reaction" class="react" type="button" aria-label="Reaccionar">
          <svg viewBox="0 0 18 18" width="18" height="18">
            <circle cx="9" cy="9" r="7.6" fill="none" stroke="#a9aaaa" stroke-width="1.6" />
            <circle cx="6.3" cy="7" r="1.2" fill="#a9aaaa" />
            <circle cx="11.7" cy="7" r="1.2" fill="#a9aaaa" />
            <path d="M4.8 10H13.2Q12.2 13.8 9 13.8Q5.8 13.8 4.8 10Z" fill="#a9aaaa" />
          </svg>
        </button>
        <div class="bubble" :class="{ bare: !m.text, long: m.intro }">
          <svg v-if="m.tail" class="tail" viewBox="0 0 8 13" width="8" height="13" aria-hidden="true">
            <path d="M8 0H1.8C.6 0 .2 1.2 1 2.2L8 11.5Z" />
          </svg>
          <template v-if="m.text">
            <span v-if="m.intro" class="text intro">{{ m.intro }}</span>
            <span class="text">{{ m.text }}</span>
            <span class="meta">
              <time>{{ m.time }}</time>
              <svg v-if="m.from === 'me'" viewBox="0 0 16 11" width="16" height="11" fill="none" stroke="#9fb8ae" stroke-width="1.3" role="img" aria-label="Entregado">
                <path d="M.8 6L4.4 9.6L11 1.2" />
                <path d="M6.8 7.8L8.6 9.6L15.2 1.2" />
              </svg>
            </span>
          </template>
        </div>
      </div>
      <div class="scroll-thumb" aria-hidden="true"></div>
    </main>

    <form class="composer" @submit.prevent>
      <div class="tools">
        <button class="icon-button" type="button" aria-label="Adjuntar">
          <svg viewBox="0 0 24 24" width="24" height="24" fill="none" stroke="#fafafa" stroke-width="2">
            <path d="M12 4.6V19.4M4.6 12H19.4" />
          </svg>
        </button>
        <button class="icon-button" type="button" aria-label="Stickers">
          <svg viewBox="0 0 24 24" width="24" height="24" fill="none" stroke="#fafafa" stroke-width="2" stroke-linejoin="round">
            <path d="M13.6 21H8.5Q3 21 3 15.5V8.5Q3 3 8.5 3H15.5Q21 3 21 8.5V13.4Q18 19.4 13.6 21Z" />
            <path d="M13.6 21V17.4Q13.6 14 17 14H21" stroke-width="1.6" />
            <path d="M7.4 13.4H13.8Q13.4 17.2 11 17.2Q8.2 17 7.4 13.4Z" fill="#fafafa" stroke-width="1" />
            <circle cx="8.4" cy="9.2" r="1.3" fill="#fafafa" stroke="none" />
            <circle cx="15.6" cy="9.2" r="1.3" fill="#fafafa" stroke="none" />
          </svg>
        </button>
      </div>
      <input v-model="draft" class="draft" type="text" placeholder="Escribe un mensaje" aria-label="Escribe un mensaje" />
      <button class="icon-button" type="button" aria-label="Mensaje de voz">
        <svg viewBox="0 0 24 24" width="24" height="24" fill="none" stroke="#fafafa" stroke-width="2">
          <rect x="9.8" y="3.2" width="4.4" height="11" rx="2.2" stroke-width="1.8" />
          <path d="M6 11.4Q6 17.4 12 17.4Q18 17.4 18 11.4M12 17.4V21" />
        </svg>
      </button>
    </form>
  </div>
</template>

<style>
body {
  margin: 0;
  background: #161717;
}
</style>

<style scoped>
.app {
  position: relative;
  display: flex;
  flex-direction: column;
  height: 100vh;
  overflow: hidden;
  background: #161717;
  color: #fafafa;
  font-family: Roboto, "Liberation Sans", sans-serif;
}

.wallpaper {
  position: absolute;
  inset: 0;
  fill: none;
  stroke: #252626;
  stroke-width: 3.6;
  stroke-linejoin: round;
  stroke-linecap: round;
}

.wallpaper .fill {
  stroke: none;
}

.wallpaper text {
  font-family: Roboto, sans-serif;
  font-weight: 700;
}

.wallpaper .thin {
  fill: #252626;
  stroke: none;
  font-weight: 400;
}

.header {
  position: relative;
  display: flex;
  align-items: flex-start;
  gap: 15px;
  box-sizing: border-box;
  height: 53px;
  flex: none;
  padding: 1px 19px 0 5px;
  background: #161717;
}

.avatar {
  width: 40px;
  height: 40px;
  flex: none;
}

.contact {
  flex: 1;
  min-width: 0;
}

.name {
  margin: 0;
  font-size: 16px;
  font-weight: 500;
  line-height: 20px;
}

.hint {
  margin: 0;
  font-size: 13px;
  line-height: 20px;
  color: #a0a1a1;
}

.actions {
  display: flex;
  gap: 24px;
  padding-top: 8px;
}

.icon-button,
.react {
  display: block;
  flex: none;
  padding: 0;
  border: 0;
  background: none;
  cursor: pointer;
}

.icon-button svg,
.react svg {
  display: block;
}

.thread {
  position: relative;
  display: flex;
  flex: 1;
  flex-direction: column;
  justify-content: flex-end;
  min-height: 0;
  overflow: hidden;
  padding: 0 62px 20px 51px;
}

.row {
  display: flex;
  align-items: center;
  flex: none;
  gap: 10px;
  margin-top: 2px;
}

.row.tailed {
  margin-top: 12px;
}

.row.me {
  justify-content: flex-end;
}

.bubble {
  position: relative;
  display: grid;
  grid-template-columns: 1fr auto;
  column-gap: 4px;
  padding: 5px 7px 9px 9px;
  border-radius: 8px;
  background: #242626;
}

.me .bubble {
  background: #144d37;
}

.contact.tailed .bubble {
  border-top-left-radius: 0;
}

.me.tailed .bubble {
  border-top-right-radius: 0;
}

.bare {
  width: 149px;
  height: 20px;
}

.long {
  min-width: 370px;
}

.text {
  font-size: 14px;
  line-height: 20px;
  white-space: pre-wrap;
}

.intro {
  grid-column: 1 / -1;
}

.meta {
  display: flex;
  align-items: center;
  align-self: end;
  justify-self: end;
  gap: 4px;
  margin-bottom: -7px;
  font-size: 12px;
  line-height: 15px;
  white-space: nowrap;
  color: #a2a3a3;
}

.me .meta {
  color: #9fb8ae;
}

.tail {
  position: absolute;
  top: 0;
  left: -8px;
  fill: #242626;
}

.me .tail {
  right: -8px;
  left: auto;
  fill: #144d37;
  transform: scaleX(-1);
}

.scroll-thumb {
  position: absolute;
  right: 0;
  bottom: 12px;
  width: 3px;
  height: 178px;
  border-radius: 2px 0 0 2px;
  background: #464747;
}

.composer {
  position: relative;
  display: flex;
  align-items: center;
  flex: none;
  gap: 14px;
  box-sizing: border-box;
  height: 52px;
  margin: 0 7px 5px 1px;
  padding: 0 14px;
  border-radius: 26px;
  background: #242626;
}

.tools {
  display: flex;
  gap: 16px;
}

.draft {
  flex: 1;
  min-width: 0;
  padding: 0;
  border: 0;
  outline: 0;
  background: none;
  color: #fafafa;
  font-family: inherit;
  font-size: 15px;
  line-height: 20px;
}

.draft::placeholder {
  color: #a0a1a1;
  opacity: 1;
}
</style>
